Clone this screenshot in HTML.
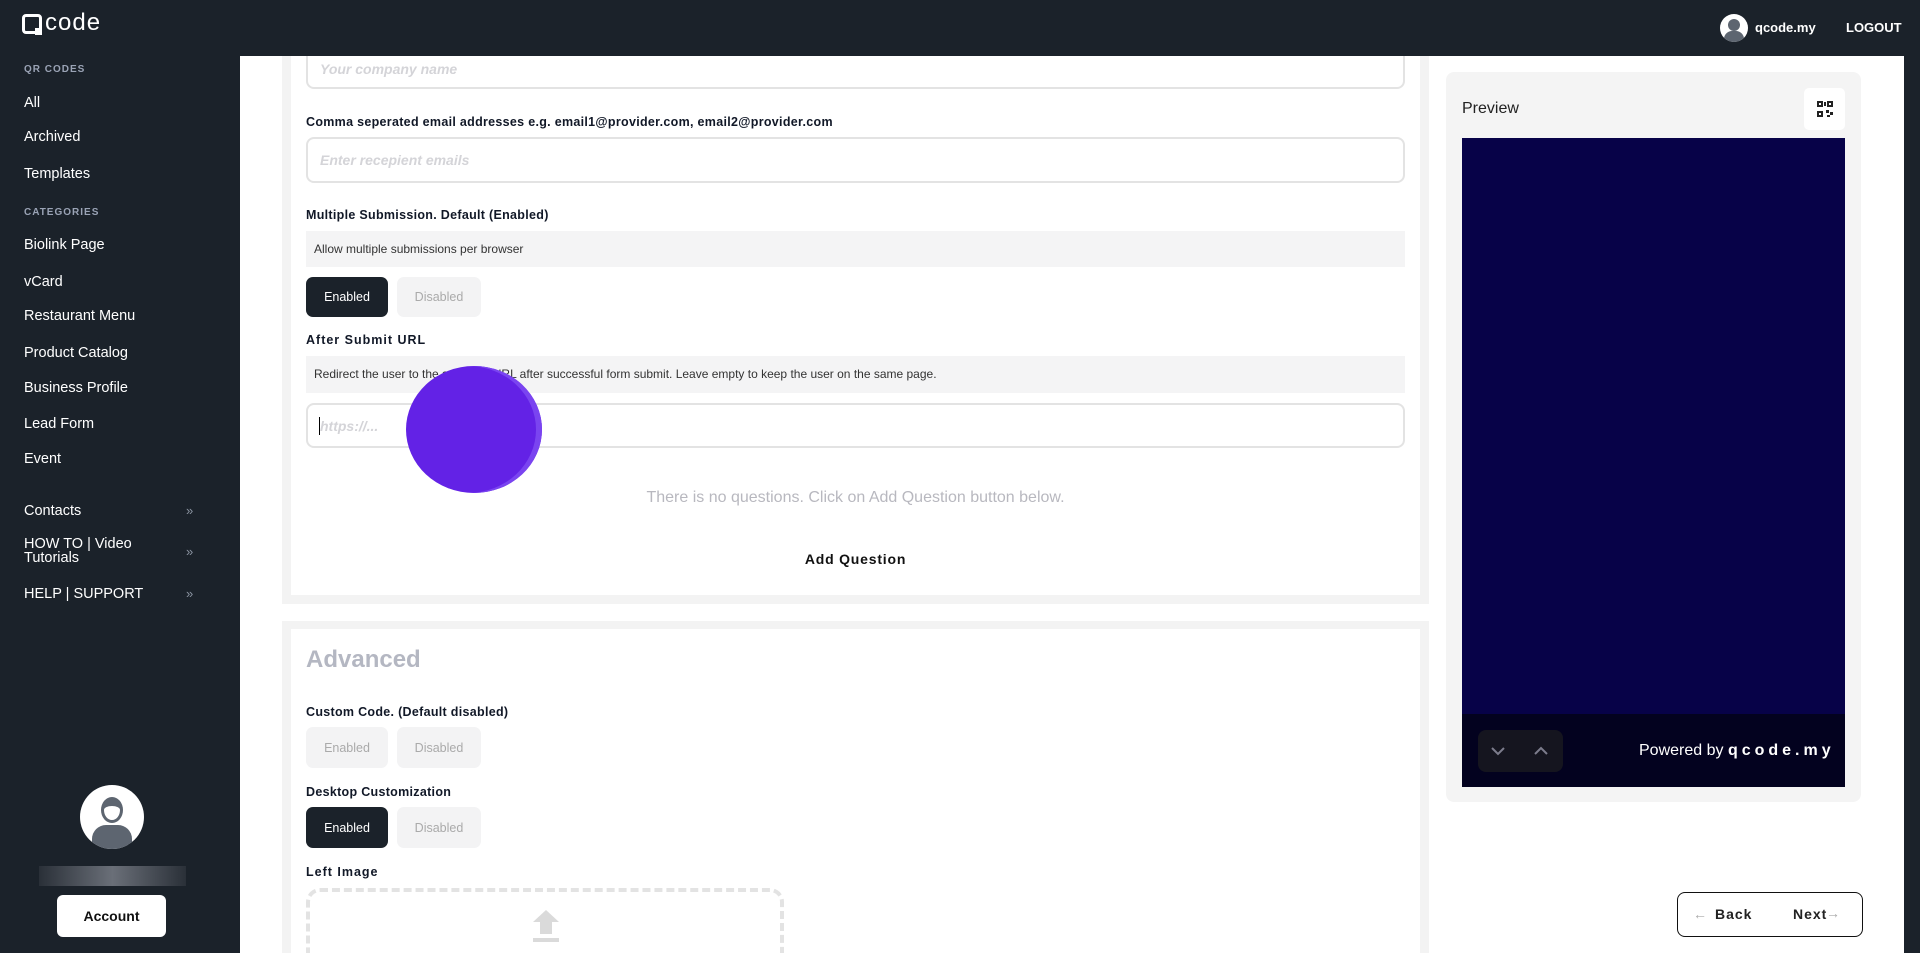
<!DOCTYPE html>
<html style="overflow:hidden"><head><meta charset="utf-8"><style>
*{box-sizing:border-box;margin:0;padding:0}
html,body{width:1920px;height:953px;overflow:hidden}
body{background:#1b222a;font-family:"Liberation Sans",sans-serif}
#w{position:relative;width:1920px;height:953px;overflow:hidden;background:#1b222a}
.abs{position:absolute}
.side a{position:absolute;left:24px;color:#fff;font-size:14.5px;text-decoration:none}
.side .cap{position:absolute;left:24px;color:#9aa3b5;font-size:10px;font-weight:bold;letter-spacing:1px}
.chev{position:absolute;left:186px;color:#8a93a0;font-size:13px}
.main{position:absolute;left:240px;top:56px;width:1664px;height:897px;background:#fff;overflow:hidden}
.card{position:absolute;background:#fff;border:9px solid #f3f3f3;border-top:none}
.lbl{position:absolute;left:306px;font-size:12.5px;font-weight:bold;color:#111827;letter-spacing:.3px}
.inp{position:absolute;left:306px;width:1099px;border:2px solid #e3e3e3;border-radius:8px;background:#fff}
.ph{position:absolute;left:12px;color:#d4d4d8;font-style:italic;font-weight:bold;font-size:14px}
.gbox{position:absolute;left:306px;width:1099px;background:#f4f4f5;font-size:12px;color:#333;padding-left:8px}
.btn{position:absolute;border-radius:7px;font-size:12.5px;display:flex;align-items:center;justify-content:center}
.on{background:#1b222a;color:#fff}
.off{background:#f3f3f4;color:#aaa}
</style></head><body><div id="w">
<div class="abs" style="left:22px;top:14px;width:20px;height:20px;border:3px solid #fff;border-radius:4px"></div>
<div class="abs" style="left:35px;top:28px;width:7px;height:7px;background:#fff"></div>
<div class="abs" style="left:45px;top:9px;color:#fff;font-size:24px;letter-spacing:1px">code</div>
<div class="abs" style="left:1720px;top:14px;width:28px;height:28px;border-radius:50%;background:#fff;overflow:hidden"><div style="position:absolute;left:8px;top:5px;width:12px;height:12px;border-radius:50%;background:#5d6570"></div><div style="position:absolute;left:4px;top:17px;width:20px;height:14px;border-radius:8px 8px 0 0;background:#5d6570"></div></div>
<div class="abs" style="left:1755px;top:20px;color:#fff;font-size:13px;font-weight:bold">qcode.my</div>
<div class="abs" style="left:1846px;top:20px;color:#fff;font-size:13px;font-weight:bold">LOGOUT</div>
<div class="side">
<div class="cap" style="top:64px">QR CODES</div>
<a style="top:95px">All</a><a style="top:129px">Archived</a><a style="top:166px">Templates</a>
<div class="cap" style="top:207px">CATEGORIES</div>
<a style="top:237px">Biolink Page</a><a style="top:274px">vCard</a><a style="top:308px">Restaurant Menu</a><a style="top:345px">Product Catalog</a><a style="top:380px">Business Profile</a><a style="top:416px">Lead Form</a><a style="top:451px">Event</a>
<a style="top:503px">Contacts</a><a style="top:537px;line-height:14px">HOW TO | Video<br>Tutorials</a><a style="top:586px">HELP | SUPPORT</a>
<div class="chev" style="top:503px">»</div><div class="chev" style="top:544px">»</div><div class="chev" style="top:586px">»</div>
</div>
<div class="abs" style="left:80px;top:785px;width:64px;height:64px;border-radius:50%;background:#fff;overflow:hidden"><div style="position:absolute;left:21px;top:12px;width:22px;height:26px;border-radius:50%;background:#fff;border:3px solid #5d6570;border-top-width:9px"></div><div style="position:absolute;left:12px;top:40px;width:40px;height:26px;border-radius:14px 14px 0 0;background:#5d6570"></div></div>
<div class="abs" style="left:39px;top:866px;width:147px;height:20px;background:linear-gradient(90deg,#2a3038,#6a6f78 50%,#2a3038)"></div>
<div class="abs" style="left:57px;top:895px;width:109px;height:42px;background:#fff;border-radius:6px;display:flex;align-items:center;justify-content:center;font-weight:bold;font-size:14px;color:#111">Account</div>
<div class="main"></div>
<div class="card" style="left:282px;top:56px;width:1147px;height:548px"></div>
<div class="inp" style="top:56px;height:33px;border-top:none;border-radius:0 0 8px 8px"><span class="ph" style="top:5px">Your company name</span></div>
<div class="lbl" style="top:115px">Comma seperated email addresses e.g. email1@provider.com, email2@provider.com</div>
<div class="inp" style="top:137px;height:46px"><span class="ph" style="top:13px">Enter recepient emails</span></div>
<div class="lbl" style="top:208px">Multiple Submission. Default (Enabled)</div>
<div class="gbox" style="top:231px;height:36px;line-height:36px">Allow multiple submissions per browser</div>
<div class="btn on" style="left:306px;top:277px;width:82px;height:40px">Enabled</div>
<div class="btn off" style="left:397px;top:277px;width:84px;height:40px">Disabled</div>
<div class="lbl" style="top:333px;letter-spacing:1px">After Submit URL</div>
<div class="gbox" style="top:356px;height:37px;line-height:37px">Redirect the user to the specified URL after successful form submit. Leave empty to keep the user on the same page.</div>
<div class="inp" style="top:403px;height:45px"><span class="ph" style="top:13px">https://...</span><span style="position:absolute;left:11px;top:12px;width:1px;height:18px;background:#000"></span></div>
<div class="abs" style="left:406px;top:366px;width:136px;height:127px;border-radius:50%;background:#6322e6;box-shadow:inset -6px 0 0 #7a44f0"></div>
<div class="abs" style="left:306px;top:489px;width:1099px;text-align:center;color:#b8b8bf;font-size:16px">There is no questions. Click on Add Question button below.</div>
<div class="abs" style="left:306px;top:551px;width:1099px;text-align:center;color:#111;font-size:14px;font-weight:bold;letter-spacing:.8px">Add Question</div>
<div class="card" style="left:282px;top:621px;width:1147px;height:332px;border-top:8px solid #f3f3f3;border-bottom:none"></div>
<div class="abs" style="left:306px;top:646px;color:#b4b7c2;font-size:24px;font-weight:bold">Advanced</div>
<div class="lbl" style="top:705px">Custom Code. (Default disabled)</div>
<div class="btn off" style="left:306px;top:727px;width:82px;height:41px">Enabled</div>
<div class="btn off" style="left:397px;top:727px;width:84px;height:41px">Disabled</div>
<div class="lbl" style="top:785px">Desktop Customization</div>
<div class="btn on" style="left:306px;top:807px;width:82px;height:41px">Enabled</div>
<div class="btn off" style="left:397px;top:807px;width:84px;height:41px">Disabled</div>
<div class="lbl" style="top:865px;letter-spacing:1px">Left Image</div>
<div class="abs" style="left:306px;top:888px;width:478px;height:65px;border:4px dashed #e3e3e3;border-bottom:none;border-radius:14px 14px 0 0"></div>
<div class="abs" style="left:533px;top:910px;width:0;height:0;border-left:13px solid transparent;border-right:13px solid transparent;border-bottom:12px solid #dadada"></div>
<div class="abs" style="left:540px;top:921px;width:12px;height:13px;background:#dadada"></div>
<div class="abs" style="left:533px;top:938px;width:26px;height:4px;background:#dadada"></div>
<div class="abs" style="left:1446px;top:72px;width:415px;height:730px;background:#f4f4f4;border-radius:8px"></div>
<div class="abs" style="left:1462px;top:100px;font-size:16px;color:#222">Preview</div>
<div class="abs" style="left:1804px;top:88px;width:41px;height:42px;background:#fff;border-radius:5px">
<svg width="41" height="42" viewBox="0 0 41 42"><g fill="#222"><rect x="13" y="13" width="6" height="6"/><rect x="23" y="13" width="6" height="6"/><rect x="13" y="23" width="6" height="6"/><rect x="20" y="14" width="2" height="4"/><rect x="22" y="22" width="3" height="3"/><rect x="26" y="24" width="3" height="3"/><rect x="23" y="27" width="3" height="2"/></g><g fill="#fff"><rect x="15" y="15" width="2" height="2"/><rect x="25" y="15" width="2" height="2"/><rect x="15" y="25" width="2" height="2"/></g></svg></div>
<div class="abs" style="left:1462px;top:138px;width:383px;height:576px;background:#070248"></div>
<div class="abs" style="left:1462px;top:714px;width:383px;height:73px;background:#03021f"></div>
<div class="abs" style="left:1478px;top:730px;width:85px;height:42px;background:#15151f;border-radius:8px"></div>
<svg class="abs" style="left:1490px;top:744px" width="60" height="14"><polyline points="2,4 8,10 14,4" fill="none" stroke="#7c7c8c" stroke-width="2"/><polyline points="45,10 51,4 57,10" fill="none" stroke="#7c7c8c" stroke-width="2"/></svg>
<div class="abs" style="left:1639px;top:742px;color:#fff;font-size:16px">Powered by <b style="letter-spacing:4px">qcode.my</b></div>
<div class="abs" style="left:1677px;top:892px;width:186px;height:45px;border:1.5px solid #111;border-radius:8px;background:#fff"></div>
<div class="abs" style="left:1693px;top:906px;color:#aaa;font-size:14px">←</div>
<div class="abs" style="left:1715px;top:906px;color:#222;font-size:14px;font-weight:bold;letter-spacing:1px">Back</div>
<div class="abs" style="left:1793px;top:906px;color:#222;font-size:14px;font-weight:bold;letter-spacing:1px">Next</div>
<div class="abs" style="left:1826px;top:905px;color:#aaa;font-size:14px">→</div>
</div></body></html>
